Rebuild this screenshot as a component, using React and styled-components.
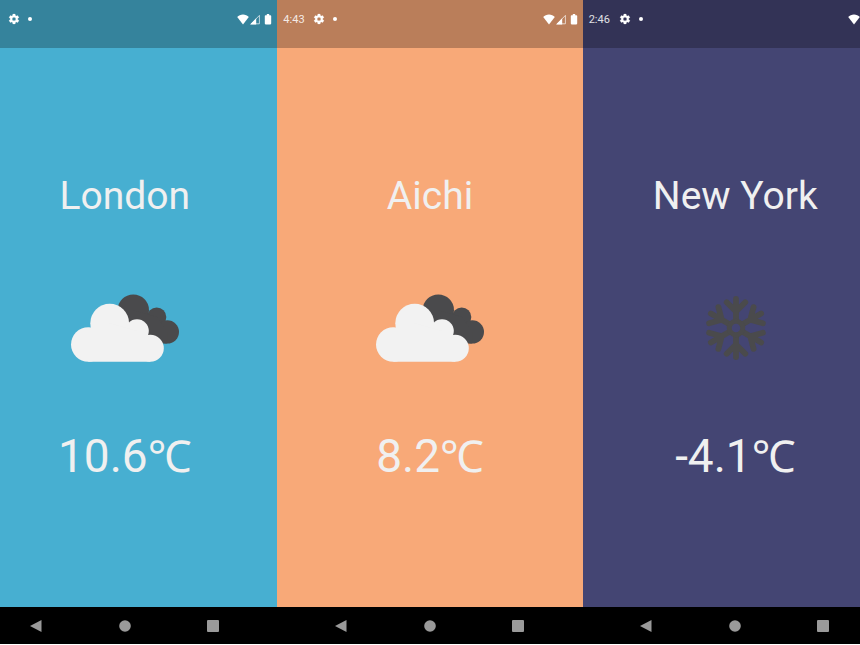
import React from "react";
import styled, { createGlobalStyle } from "styled-components";

const GlobalStyle = createGlobalStyle`
  *, *::before, *::after { box-sizing: border-box; }
  body {
    margin: 0;
    background: #ffffff;
    font-family: Roboto, "Noto Sans", "Noto Sans CJK JP", sans-serif;
  }
`;

const Gallery = styled.main`
  display: grid;
  grid-template-columns: repeat(3, 35.5vw);
  justify-content: center;
  min-height: calc(100vh - 1px);
  overflow: hidden;
`;

const Screen = styled.section`
  display: flex;
  flex-direction: column;
  background: ${(p) => p.$color};
  color: #f0f0f0;
`;

const StatusBar = styled.header`
  display: flex;
  align-items: flex-start;
  justify-content: space-between;
  height: 48px;
  padding: 12px 4px 0 6px;
  background: rgba(0, 0, 0, 0.25);
`;

const StatusGroup = styled.div`
  display: flex;
  align-items: center;
  height: 14px;
  gap: ${(p) => p.$gap}px;
`;

const Time = styled.time`
  width: 22px;
  font-size: 11px;
  line-height: 12px;
  padding-top: 2px;
  color: #ffffff;
  opacity: 0.85;
`;

const Dot = styled.span`
  width: 4px;
  height: 4px;
  border-radius: 50%;
  background: #ffffff;
`;

const Weather = styled.div`
  flex: 1;
  display: flex;
  flex-direction: column;
  align-items: center;
  justify-content: center;
  gap: 60px;
`;

const City = styled.h1`
  margin: 0;
  font-size: 39px;
  font-weight: 400;
  line-height: 48px;
`;

const Temperature = styled.p`
  margin: 0;
  font-size: 46px;
  line-height: 56px;
`;

const Unit = styled.span`
  font-family: "Noto Sans", "Noto Sans CJK JP", sans-serif;
  font-size: 44px;
  line-height: 1;
`;

const NavBar = styled.nav`
  display: flex;
  justify-content: center;
  height: 37px;
  background: #000000;
`;

const NavButton = styled.button`
  display: flex;
  align-items: center;
  justify-content: center;
  width: 88px;
  padding: 0;
  border: 0;
  background: none;
  color: #9a9a9a;
`;

function GearIcon() {
  return (
    <svg width="12" height="12" viewBox="0 0 24 24" fill="#fff" aria-hidden="true">
      <path
        fillRule="evenodd"
        stroke="#fff"
        strokeWidth="0.4"
        d="M19.4 13c.04-.32.07-.65.07-1s-.03-.68-.07-1l2.11-1.65a.5.5 0 0 0 .12-.64l-2-3.46a.5.5 0 0 0-.61-.22l-2.49 1a7.3 7.3 0 0 0-1.69-.98l-.38-2.65A.5.5 0 0 0 14 2h-4a.5.5 0 0 0-.49.42l-.38 2.65c-.61.25-1.17.59-1.69.98l-2.49-1a.5.5 0 0 0-.61.22l-2 3.46a.5.5 0 0 0 .12.64L4.57 11c-.04.32-.07.65-.07 1s.03.68.07 1l-2.11 1.65a.5.5 0 0 0-.12.64l2 3.46c.12.22.39.3.61.22l2.49-1c.52.4 1.08.73 1.69.98l.38 2.65c.03.24.24.4.49.4h4c.25 0 .46-.16.49-.4l.38-2.65a7.3 7.3 0 0 0 1.69-.98l2.49 1c.23.09.49 0 .61-.22l2-3.46a.5.5 0 0 0-.12-.64zM12 15.7a3.7 3.7 0 1 1 0-7.4 3.7 3.7 0 0 1 0 7.4z"
      />
    </svg>
  );
}

function WifiIcon() {
  return (
    <svg width="12" height="12" viewBox="0 0 12 12" fill="#fff" aria-label="Wi-Fi" role="img">
      <path d="M6 11.4 0.2 4C1.6 2.4 3.7 1.4 6 1.4s4.4 1 5.8 2.6z" />
    </svg>
  );
}

function SignalIcon() {
  return (
    <svg width="10" height="12" viewBox="0 0 10 12" aria-label="Signal" role="img">
      <path d="M1.2 10.8 9.4 2.4v8.4z" fill="none" stroke="#fff" strokeOpacity="0.75" strokeWidth="0.9" />
      <path d="M0 11.4 6.2 5.2V11.4z" fill="#fff" />
    </svg>
  );
}

function BatteryIcon() {
  return (
    <svg width="12" height="12" viewBox="0 0 12 12" fill="#fff" aria-label="Battery" role="img">
      <path d="M4.6 2.2H5.8V1h2.4v1.2h1.2q.8 0 .8.8v7.6q0 .8-.8.8H4.6q-.8 0-.8-.8V3q0-.8.8-.8z" />
    </svg>
  );
}

function CloudsIcon() {
  return (
    <svg width="112" height="88" viewBox="0 0 112 88" role="img" aria-label="Cloudy">
      <g fill="#4a4a4c">
        <circle cx="64.3" cy="30.2" r="15.7" />
        <circle cx="87.7" cy="37.1" r="9.6" />
        <circle cx="98.3" cy="51.9" r="11.7" />
        <path d="M64 30 88 37 98.3 52V63.6H64z" />
      </g>
      <g fill="#f2f2f2">
        <circle cx="19.3" cy="64.5" r="17.3" />
        <circle cx="40.7" cy="43.2" r="19.4" />
        <circle cx="68" cy="51" r="11.8" />
        <circle cx="81.3" cy="68.3" r="13.5" />
        <path d="M19.3 60 40 43 68 51 81.3 60V81.8H19.3z" />
      </g>
    </svg>
  );
}

function SnowIcon() {
  return (
    <svg width="112" height="88" viewBox="0 0 112 88" role="img" aria-label="Snow">
      <g transform="translate(57 48)" fill="none" stroke="#4a4a4c" strokeWidth="5.8" strokeLinecap="round">
        {[0, 60, 120, 180, 240, 300].map((angle) => (
          <path key={angle} transform={`rotate(${angle})`} d="M0-8V-29M-9.3-25.7 0-16.5 9.3-25.7" />
        ))}
        <circle r="6.8" strokeWidth="5" />
      </g>
    </svg>
  );
}

const weatherIcons = { clouds: CloudsIcon, snow: SnowIcon };

const places = [
  { city: "London", degrees: "10.6", time: "", icon: "clouds", color: "#47afd1" },
  { city: "Aichi", degrees: "8.2", time: "4:43", icon: "clouds", color: "#f8a978" },
  { city: "New York", degrees: "-4.1", time: "2:46", icon: "snow", color: "#444573" },
];

function Phone({ place }) {
  const WeatherIcon = weatherIcons[place.icon];
  return (
    <Screen $color={place.color}>
      <StatusBar>
        <StatusGroup $gap={8}>
          <Time>{place.time}</Time>
          <GearIcon />
          <Dot />
        </StatusGroup>
        <StatusGroup $gap={1}>
          <WifiIcon />
          <SignalIcon />
          <BatteryIcon />
        </StatusGroup>
      </StatusBar>
      <Weather>
        <City>{place.city}</City>
        <WeatherIcon />
        <Temperature>
          {place.degrees}
          <Unit>℃</Unit>
        </Temperature>
      </Weather>
      <NavBar aria-label="System navigation">
        <NavButton type="button" aria-label="Back">
          <svg width="14" height="12" viewBox="0 0 14 12" fill="currentColor">
            <path d="M0 6 11.5 0v12z" />
          </svg>
        </NavButton>
        <NavButton type="button" aria-label="Home">
          <svg width="12" height="12" viewBox="0 0 12 12" fill="currentColor">
            <circle cx="6" cy="6" r="5.8" />
          </svg>
        </NavButton>
        <NavButton type="button" aria-label="Recent apps">
          <svg width="12" height="12" viewBox="0 0 12 12" fill="currentColor">
            <rect width="12" height="12" rx="1" />
          </svg>
        </NavButton>
      </NavBar>
    </Screen>
  );
}

export default function App() {
  return (
    <>
      <GlobalStyle />
      <Gallery>
        {places.map((place) => (
          <Phone key={place.city} place={place} />
        ))}
      </Gallery>
    </>
  );
}
